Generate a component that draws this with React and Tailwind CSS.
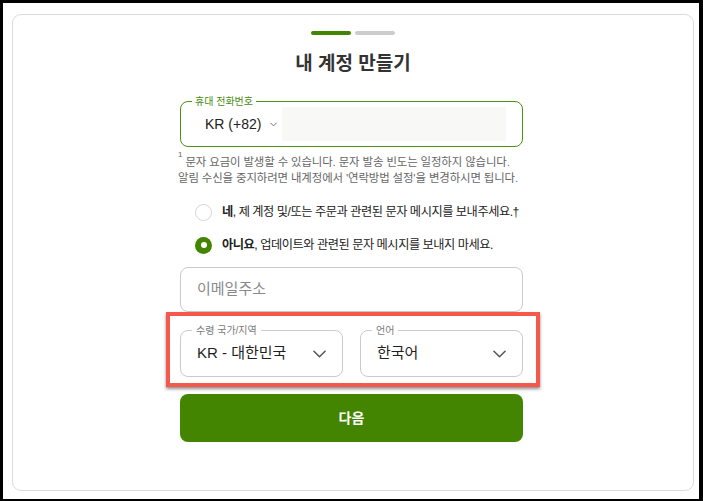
import { ChevronDown } from "lucide-react";

function Chevron({ className }) {
  return (
    <svg viewBox="0 0 14 8" className={className} fill="none" stroke="currentColor" strokeWidth="1.6" strokeLinecap="round" strokeLinejoin="round">
      <path d="M1 1l6 6 6-6" />
    </svg>
  );
}

function SelectBox({ label, value }) {
  return (
    <div className="relative h-[47px] rounded-[8px] border border-[#cbcbcb] flex items-center justify-between pl-[16px] pr-[16px]">
      <span className="absolute -top-[7px] left-[11px] bg-white px-[4px] text-[10px] leading-[13px] text-[#7a7a7a]">{label}</span>
      <span className="text-[15px] text-[#1f1f1f]">{value}</span>
      <Chevron className="w-[13px] h-[8px] text-[#555]" />
    </div>
  );
}

export default function App() {
  return (
    <div
      className="w-[703px] h-[501px] bg-black pt-[3px] pl-[3px] pr-[4px] pb-[2px]"
      style={{ fontFamily: '"Liberation Sans", "Noto Sans CJK KR", sans-serif' }}
    >
      <div className="h-full bg-white pt-[11px] pl-[9px] pr-[5px] pb-[8px]">
        <div className="h-full rounded-[9px] border border-[#dcdcdc] pt-[16px]">
          <div className="flex justify-center gap-[4px]">
            <div className="w-[40px] h-[4px] rounded-full bg-[#438500]" />
            <div className="w-[40px] h-[4px] rounded-full bg-[#cccccc]" />
          </div>
          <h1 className="mt-[16px] text-center text-[19px] leading-[26px] font-bold text-[#333]">내 계정 만들기</h1>

          <div className="w-[343px] ml-[167px]">
            <div className="relative mt-[24px] h-[46px] rounded-[8px] border border-[#4f8f16] flex items-center">
              <span className="absolute -top-[7px] left-[11px] bg-white px-[3px] text-[10px] leading-[13px] text-[#4a8a12]">휴대 전화번호</span>
              <span className="ml-[24px] text-[14px] text-[#222]">KR (+82)</span>
              <ChevronDown className="ml-[7px] w-[11px] h-[11px] text-[#666]" strokeWidth={2} />
              <div className="ml-[3px] w-[224px] h-[34px] bg-[#f8f8f6]" />
            </div>

            <p className="mt-[7px] -ml-[2px] text-[11.4px] leading-[16px] tracking-[-0.1px] text-[#666] whitespace-nowrap">
              <sup className="text-[8px] align-super">1</sup> 문자 요금이 발생할 수 있습니다. 문자 발송 빈도는 일정하지 않습니다.
              <br />
              알림 수신을 중지하려면 내계정에서 '연락방법 설정'을 변경하시면 됩니다.
            </p>

            <div className="mt-[16px] pl-[15px] flex flex-col gap-[13px]">
              <div className="flex items-center gap-[10px] h-[20px]">
                <div className="shrink-0 w-[17px] h-[17px] rounded-full border border-[#d6d6d6]" />
                <span className="text-[12.2px] tracking-[-0.45px] text-[#222] whitespace-nowrap">
                  <b>네</b>, 제 계정 및/또는 주문과 관련된 문자 메시지를 보내주세요.†
                </span>
              </div>
              <div className="flex items-center gap-[10px] h-[20px]">
                <div className="shrink-0 w-[17px] h-[17px] rounded-full bg-[#438500] flex items-center justify-center">
                  <div className="w-[6px] h-[6px] rounded-full bg-white" />
                </div>
                <span className="text-[12.2px] tracking-[-0.45px] text-[#222] whitespace-nowrap">
                  <b>아니요</b>, 업데이트와 관련된 문자 메시지를 보내지 마세요.
                </span>
              </div>
            </div>

            <div className="mt-[12px] h-[45px] rounded-[8px] border border-[#cbcbcb] flex items-center pl-[16px]">
              <span className="text-[15px] text-[#8a8a8a]">이메일주소</span>
            </div>

            <div className="-ml-[14px] -mr-[17px] border-4 border-[#f4594c] pt-[14px] pb-[6px] pl-[10px] pr-[13px] shadow-[0_2px_3px_rgba(0,0,0,0.45)]">
              <div className="grid grid-cols-2 gap-[17px]">
                <SelectBox label="수령 국가/지역" value="KR - 대한민국" />
                <SelectBox label="언어" value="한국어" />
              </div>
            </div>

            <button className="mt-[7px] w-full h-[48px] rounded-[8px] bg-[#438500] text-white text-[14px] font-bold">다음</button>
          </div>
        </div>
      </div>
    </div>
  );
}
